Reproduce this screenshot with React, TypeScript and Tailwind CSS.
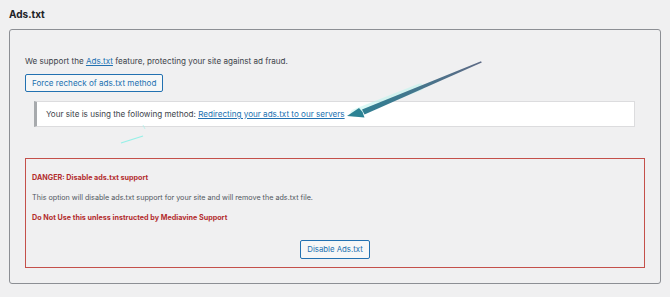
const Arrow = () => (
  <svg
    className="pointer-events-none absolute left-0 top-0"
    width="670"
    height="297"
    viewBox="0 0 670 297"
  >
    <defs>
      <linearGradient id="arrowGrad" x1="481" y1="62" x2="350" y2="115" gradientUnits="userSpaceOnUse">
        <stop offset="0" stopColor="#5d6a85" />
        <stop offset="1" stopColor="#2c8194" />
      </linearGradient>
    </defs>
    <path d="M354 113 L420 87" stroke="#b8f5ee" strokeWidth="7" strokeLinecap="round" opacity="0.5" />
    <path d="M481 61.2 L481.8 62.6 L364.5 114.5 L362 109.5 Z" fill="url(#arrowGrad)" />
    <path d="M347 116 L359 108 L362.5 112 L364.5 117.5 Z" fill="#2b8294" />
    <path d="M121 143 L143 136" stroke="#7ff0e6" strokeWidth="1.2" opacity="0.8" />
    <path d="M143 125 L145 129" stroke="#9ff3ea" strokeWidth="1" opacity="0.6" />
  </svg>
);

export default function App() {
  return (
    <div
      className="relative min-h-[297px] w-[670px] bg-[#f0f0f1] pt-[7px] text-[#3c434a]"
      style={{ fontFamily: 'Inter, "Liberation Sans", sans-serif' }}
    >
      <h1 className="ml-[9px] text-[10px] font-bold leading-[14px] text-[#1d2327]">Ads.txt</h1>

      <div className="mx-[9px] mt-[8px] h-[255px] rounded-[3px] border-[1.5px] border-[#8c8f94] px-[15px] pt-[25px]">
        <p className="text-[8.1px] leading-[12px]">
          We support the{' '}
          <a className="text-[#2271b1] underline">Ads.txt</a> feature, protecting your site against ad
          fraud.
        </p>

        <button className="mt-[7px] flex h-[18px] items-center rounded-[2px] border border-[#2271b1] bg-[#f6f7f7] px-[6px] text-[8.1px] text-[#2271b1]">
          Force recheck of ads.txt method
        </button>

        <div className="ml-[9px] mr-[10px] mt-[9px] flex h-[26px] items-center border border-l-[3px] border-[#dcdcde] border-l-[#a7aaad] bg-white pl-[9px] text-[8.1px]">
          Your site is using the following method:&nbsp;
          <a className="text-[#2271b1] underline">Redirecting your ads.txt to our servers</a>
        </div>

        <div className="mt-[31px] flex h-[110px] flex-col border border-[#c4504a] px-[6px] pt-[14px] text-[7.2px] leading-[9px]">
          <p className="font-bold text-[#b32d2e]">DANGER: Disable ads.txt support</p>
          <p className="mt-[11px] text-[#50575e]">
            This option will disable ads.txt support for your site and will remove the ads.txt file.
          </p>
          <p className="mt-[11px] font-bold text-[#b32d2e]">Do Not Use this unless instructed by Mediavine Support</p>
          <div className="mt-[18px] flex justify-center">
            <button className="flex h-[19px] items-center rounded-[2px] border border-[#2271b1] bg-[#f6f7f7] px-[6px] text-[7.8px] text-[#2271b1]">
              Disable Ads.txt
            </button>
          </div>
        </div>
      </div>
      <Arrow />
    </div>
  );
}
